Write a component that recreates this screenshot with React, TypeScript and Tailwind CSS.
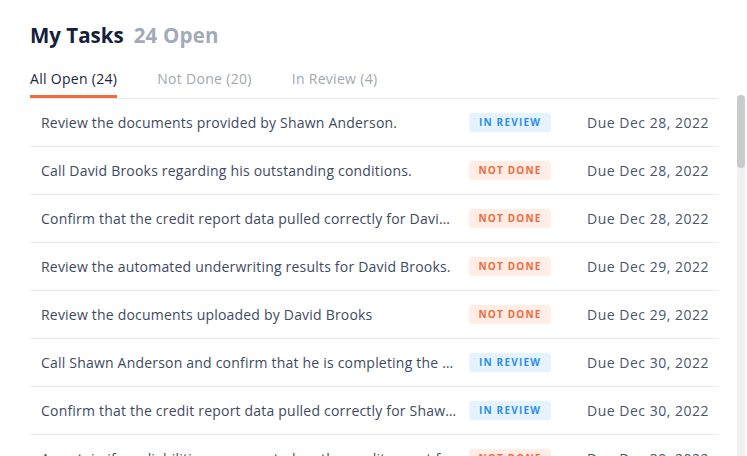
import React from "react";

type Task = { title: string; status: "review" | "notdone"; due: string };

const tasks: Task[] = [
  { title: "Review the documents provided by Shawn Anderson.", status: "review", due: "Due Dec 28, 2022" },
  { title: "Call David Brooks regarding his outstanding conditions.", status: "notdone", due: "Due Dec 28, 2022" },
  { title: "Confirm that the credit report data pulled correctly for David Brooks.", status: "notdone", due: "Due Dec 28, 2022" },
  { title: "Review the automated underwriting results for David Brooks.", status: "notdone", due: "Due Dec 29, 2022" },
  { title: "Review the documents uploaded by David Brooks", status: "notdone", due: "Due Dec 29, 2022" },
  { title: "Call Shawn Anderson and confirm that he is completing the application.", status: "review", due: "Due Dec 30, 2022" },
  { title: "Confirm that the credit report data pulled correctly for Shawn Anderson.", status: "review", due: "Due Dec 30, 2022" },
  { title: "Ascertain if any liabilities are reported on the credit report for David Brooks.", status: "notdone", due: "Due Dec 30, 2022" },
];

function Badge({ status }: { status: Task["status"] }) {
  if (status === "review") {
    return (
      <span className="flex h-[19px] w-[82px] items-center justify-center rounded-[3px] bg-[#e5f3ff] text-[10px] font-bold tracking-[1.2px] text-[#2b90ec]">
        IN REVIEW
      </span>
    );
  }
  return (
    <span className="flex h-[19px] w-[82px] items-center justify-center rounded-[3px] bg-[#ffede6] text-[10px] font-bold tracking-[1.2px] text-[#f5693a]">
      NOT DONE
    </span>
  );
}

export default function App() {
  return (
    <div
      className="relative h-[456px] w-[747px] overflow-hidden bg-white"
      style={{ fontFamily: '"Open Sans", "Liberation Sans", sans-serif' }}
    >
      <div className="pl-[30px] pt-[21px]">
        <div className="flex items-baseline gap-[10px]">
          <span className="text-[20.5px] font-bold leading-[28px] text-[#15213b]">My Tasks</span>
          <span className="text-[20.5px] font-bold leading-[28px] tracking-[0.2px] text-[#a3aab7]">24 Open</span>
        </div>
        <div className="mt-[21px] flex w-[688px] gap-[40px] border-b border-[#e6e8ec]">
          <div className="border-b-[3px] border-[#f26b3a] pb-[7px] text-[14px] leading-[18px] tracking-[0.3px] text-[#1b2540]">
            All Open (24)
          </div>
          <div className="pb-[7px] text-[14px] leading-[18px] tracking-[0.3px] text-[#a1a7b3]">Not Done (20)</div>
          <div className="pb-[7px] text-[14px] leading-[18px] tracking-[0.3px] text-[#a1a7b3]">In Review (4)</div>
        </div>
      </div>
      <div className="flex">
        <div className="ml-[30px] w-[688px]">
          {tasks.map((t, i) => (
            <div
              key={i}
              className="flex h-[48px] items-center border-b border-[#e9ebee] pl-[11px] pr-[9px]"
            >
              <div className="w-[416px] truncate text-[14px] tracking-[0.2px] text-[#3e4a62]">{t.title}</div>
              <div className="ml-[12px]">
                <Badge status={t.status} />
              </div>
              <div className="ml-auto text-[14px] tracking-[0.5px] text-[#4a556b]">{t.due}</div>
            </div>
          ))}
        </div>
      </div>
      <div className="absolute right-[2px] top-[95px] h-[361px] w-[8px] rounded-t-[4px] bg-[#f1f1f3]">
        <div className="h-[73px] w-[8px] rounded-[4px] bg-[#c9cacd]" />
      </div>
    </div>
  );
}
